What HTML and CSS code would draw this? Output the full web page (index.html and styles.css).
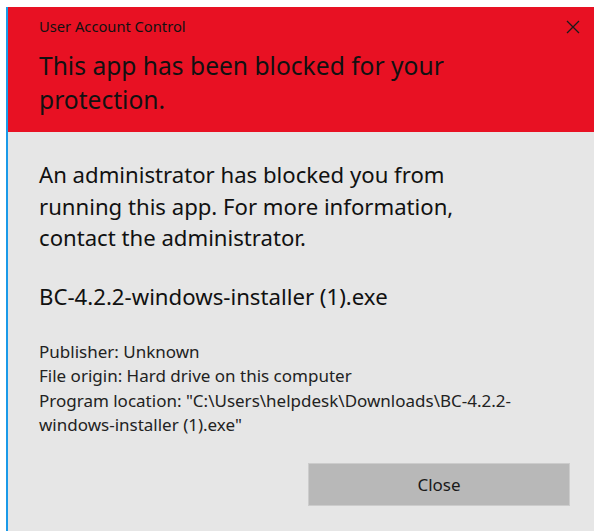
FILE: index.html
```html
<!DOCTYPE html>
<html lang="en">
<head>
<meta charset="utf-8">
<title>User Account Control</title>
<link rel="stylesheet" href="styles.css">
</head>
<body>
<div class="screen">
  <div class="dialog">
    <header class="banner">
      <div class="titlebar">
        <span class="app-title">User Account Control</span>
        <button class="close-x" aria-label="Close">
          <svg width="14" height="14" viewBox="0 0 14 14"><path d="M1 1 L13 13 M13 1 L1 13" stroke="#1a1a1a" stroke-width="1.3" fill="none"/></svg>
        </button>
      </div>
      <h1 class="headline">This app has been blocked for your<br>protection.</h1>
    </header>
    <main class="content">
      <p class="message">An administrator has blocked you from<br>running this app. For more information,<br>contact the administrator.</p>
      <p class="filename">BC-4.2.2-windows-installer (1).exe</p>
      <div class="details">
        <div>Publisher: Unknown</div>
        <div>File origin: Hard drive on this computer</div>
        <div>Program location: "C:\Users\helpdesk\Downloads\BC-4.2.2-<br>windows-installer (1).exe"</div>
      </div>
      <div class="actions">
        <button class="close-btn">Close</button>
      </div>
    </main>
  </div>
</div>
</body>
</html>
```
FILE: styles.css
```css
html, body {
  margin: 0;
  padding: 0;
  background: #ffffff;
  height: 100%;
  overflow: hidden;
}

.screen {
  padding: 7px 0 0 6px;
  height: 100%;
  box-sizing: border-box;
  font-family: "Noto Sans", "Open Sans", sans-serif;
}

.dialog {
  border-left: 2px solid #1a9ae8;
  background: #e6e6e6;
  height: 100%;
}

.banner {
  background: #e81123;
  color: #111111;
  padding: 8px 14px 15px 31px;
}

.titlebar {
  display: flex;
  justify-content: space-between;
  align-items: center;
  height: 20px;
}

.app-title {
  font-size: 14.7px;
  line-height: 20px;
  padding-top: 1px;
}

.close-x {
  border: 0;
  background: transparent;
  padding: 0;
  width: 14px;
  height: 14px;
  display: flex;
  margin-top: 4px;
}

.headline {
  margin: 14px 0 0;
  font-weight: normal;
  font-size: 24.6px;
  line-height: 34px;
}

.content {
  padding: 27px 24px 0 31px;
  color: #111111;
}

.message {
  margin: 0;
  font-size: 22.15px;
  line-height: 31.5px;
}

.filename {
  margin: 27.5px 0 0;
  font-size: 22.2px;
  line-height: 31.5px;
}

.details {
  margin-top: 27px;
  font-size: 17px;
  line-height: 24.5px;
  color: #222222;
}

.actions {
  display: flex;
  justify-content: flex-end;
  margin-top: 25px;
}

.close-btn {
  width: 262px;
  height: 43px;
  background: #b8b8b8;
  border: 1px solid #cccccc;
  font-family: inherit;
  font-size: 17px;
  color: #1a1a1a;
}
```
